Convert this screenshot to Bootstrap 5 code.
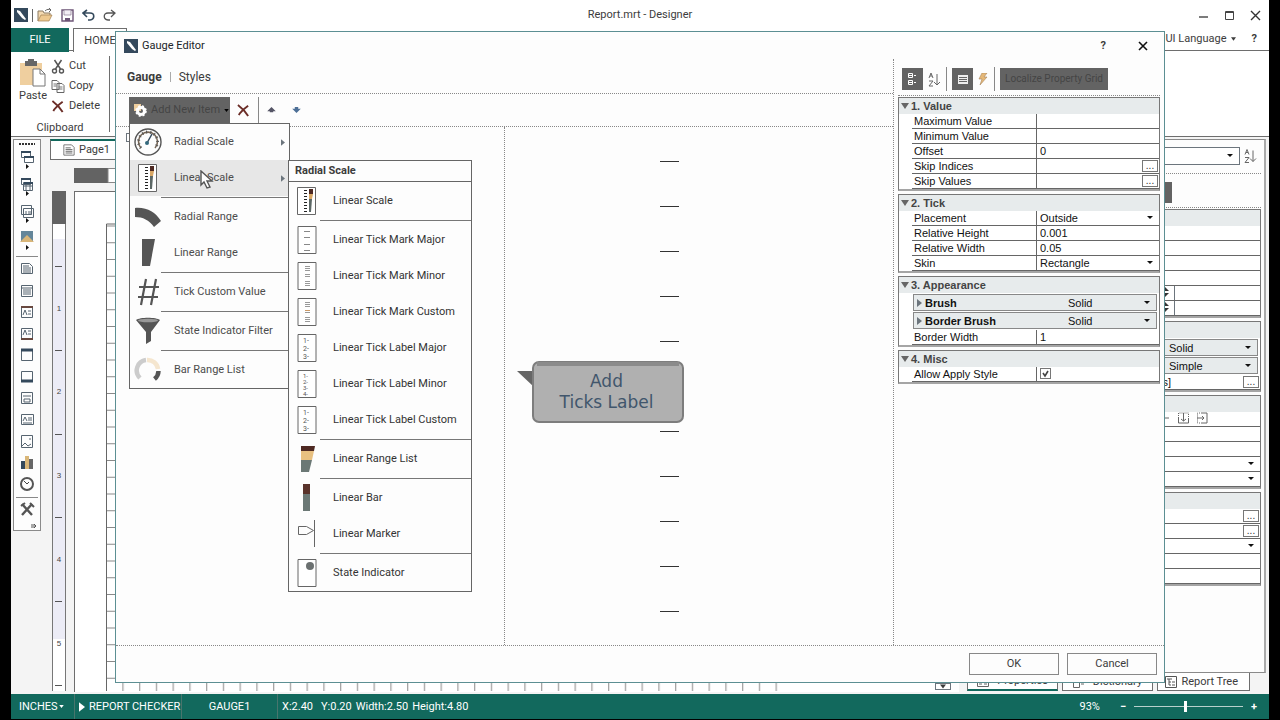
<!DOCTYPE html>
<html lang="en">
<head>
<meta charset="utf-8">
<meta name="viewport" content="width=device-width, initial-scale=1">
<title>Report.mrt - Designer</title>
<link href="https://cdn.jsdelivr.net/npm/bootstrap@5.3.0/dist/css/bootstrap.min.css" rel="stylesheet">
<style>
:root{--teal:#12695d;--line:#6e6e6e;--ink:#3c3c3c;--head:#e7ebec}
body{background:#000;font-family:Roboto,"Liberation Sans",sans-serif;font-size:11px;line-height:16px;color:var(--ink)}
button,input,select{font:inherit;color:inherit;border-radius:0}
svg{display:block;flex:none}
a{color:inherit;text-decoration:none}
.app{margin:0 11px;min-height:100vh;background:#fff;border-bottom:1px solid #000}
.plain{border:0;background:none;padding:0;display:flex;align-items:center}
.titlebar{height:28px;padding:2px 8px 0 3px}
.filetab{background:var(--teal);color:#fff;width:58px;height:24px}
.hometab{border:1px solid var(--line);border-bottom:0;width:54px;height:24px}
.tabfill{border-bottom:1px solid var(--line);height:23px}
.ribbon{height:85px;border-bottom:1px solid var(--line)}
.clip{width:99px;border-right:1px solid var(--line);margin:4px 0 0;height:76px}
.work{background:#f4f4f4;min-height:0}
.toolstrip{width:28px;border:1px solid #8a8a8a;background:#fdfdfd;margin:2px 0 0 2px;align-self:flex-start}
.pagetab{width:90px;height:21px;border:1px solid var(--line);border-top:2px solid var(--teal);background:#fff;padding-left:12px}
.sheet{background:#fff;border:1px solid var(--line);border-width:1px 0 0 1px}
.side{width:310px}
.sidebox{border:1px solid #8a8a8a;border-right:2px solid #aaa;background:#fdfdfd;margin-top:2px;padding:7px 3px 0 4px}
.btab{height:18px;width:91px;background:#fff;border:1px solid var(--line);border-top:0}
.btab.active{border-bottom:2px solid var(--teal)}
.status{background:var(--teal);color:#fff;height:25px;padding:0 8px}
.cell{border-right:1px solid #48756d;height:25px}
.zoomer{appearance:none;width:109px;height:14px;background:linear-gradient(#b9d0cc,#b9d0cc) center/100% 1px no-repeat}
.zoomer::-webkit-slider-thumb{appearance:none;width:3px;height:11px;background:#fff}
/* property grid shared by the side panel and the dialog */
.group{border:1px solid #777;border-bottom:2px solid #a5a5a5;background:#fff;margin-bottom:3px;font-family:"Liberation Sans",Arial,sans-serif;color:#111;line-height:14px}
.group h2{font-size:11px;font-weight:700;line-height:14px;height:16px;margin:0;background:var(--head);padding-left:2px;color:#444;gap:2px}
.first{margin-top:1px}
.prow{margin-left:13px;height:15px;border-bottom:1px solid #666;display:flex}
.prow label{width:125px;padding-left:2px;border-right:1px solid #666;flex:none}
.prow input:not([type=checkbox]),.prow select{border:0;outline:0;background:none;flex:1;min-width:0;padding:0 3px;height:14px;line-height:14px}
select{appearance:none;background:url("data:image/svg+xml,%3Csvg xmlns='http://www.w3.org/2000/svg' width='6' height='4'%3E%3Cpath d='M0 0h6L3 3z' fill='%23111'/%3E%3C/svg%3E") right 6px center no-repeat!important}
.prow input[type=checkbox]{appearance:none;width:11px;height:11px;border:1px solid #777;margin:1px 3px;background:url("data:image/svg+xml,%3Csvg xmlns='http://www.w3.org/2000/svg' width='9' height='9'%3E%3Cpath d='M2 4l2 3 3-5' fill='none' stroke='%23444' stroke-width='1.6'/%3E%3C/svg%3E")}
.more{width:16px;height:12px;border:1px solid #777;background:#fff;line-height:8px;padding:0;margin:1px 1px 0;font-size:10px;flex:none;color:#333}
.brush{height:17px;border:1px solid #888;background:var(--head);margin:1px 2px 1px 14px;padding-left:3px;gap:3px;font-weight:700}
.brush select{border:0;background:none;width:88px;height:15px;padding:0;font-weight:400}
/* dialog */
.editor{position:absolute;top:31px;left:115px;right:115px;bottom:37px;background:#fdfdfd;border:1px solid #5c8f93;z-index:5}
.dots-b{border-bottom:1px dotted #888}
.dots-r{border-right:1px dotted #888}
.dark{background:#636363;height:22px}
.faint{color:#454545}
.pop{position:absolute;background:#fdfdfd;border:1px solid #666;z-index:10}
.pop hr{margin:1px 0 1px 31px;border:0;border-top:1px solid #777;opacity:1}
.entry{height:36px;width:100%;border:0;background:none;display:flex;align-items:center;padding:0 4px;gap:12px;text-align:left;color:#4c4c4c}
.entry.on{background:#e7e7e7}
.entry .go{margin-left:auto}
.sub .entry{color:#333}
.sub h3{font-size:11px;font-weight:700;line-height:20px;margin:0 0 1px;padding-left:6px;border-bottom:1px solid #666}
.okbtn{width:90px;height:22px;border:1px solid #888;background:#fdfdfd}
.bubble{position:absolute;left:12px;top:232px;z-index:2}
.bubble div{position:absolute;left:14px;right:2px;top:0;bottom:0;font-family:"DejaVu Sans",sans-serif;font-size:17px;line-height:21px;color:#41566c}
</style>
</head>
<body>
<svg width="0" height="0" class="position-absolute" aria-hidden="true">
<defs>
<symbol id="logo" viewBox="0 0 14 14"><path d="M0 0h14v14H0z" fill="#34495c"/><path d="M3 2l3 1 6 8-1 1-3-2-5-6z" fill="#fff"/></symbol>
<symbol id="del" viewBox="0 0 14 14"><path d="M1 1c4 3 8 7 11 12M12 2C8 5 4 8 2 12" stroke="#6b2d27" stroke-width="2" fill="none"/></symbol>
<symbol id="az" viewBox="0 0 13 15"><path d="M1 6l2-5 2 5M2 4h2M1 9h4l-4 5h4M9 2v11M6 10l3 3 3-3" fill="none" stroke="#666"/></symbol>
<symbol id="dn" viewBox="0 0 6 4"><path d="M0 0h6L3 4z" fill="currentColor"/></symbol>
<symbol id="rt" viewBox="0 0 5 8"><path d="M0 0v8l5-4z" fill="currentColor"/></symbol>
<symbol id="tri" viewBox="0 0 8 6"><path d="M0 0h8L4 6z" fill="#666"/></symbol>
<symbol id="box" viewBox="0 0 20 28"><path d="M1 .5h18v27H1z" fill="#fff" stroke="#666"/></symbol>
<symbol id="lscale" viewBox="0 0 20 28"><path d="M.5.5h18v27H.5z" fill="#fff" stroke="#666"/><path d="M8.500 3v22" stroke="#222" stroke-width="3" stroke-dasharray="1 2"/><path d="M12 2h4v5h-4z" fill="#4e2922"/><path d="M12 7h4l-1 5h-3z" fill="#d9a765"/><path d="M12 12h3l-1 13h-2z" fill="#5c6765"/></symbol>
<symbol id="sheetico" viewBox="0 0 14 14"><path d="M1 1h9l3 3v9H1z" fill="#fff" stroke="#666"/><path d="M3 4.500h6M3 6.500h8M3 8.500h8M3 10.500h8" stroke="#555"/></symbol>
</defs></svg>

<div class="app d-flex flex-column position-relative">
  <header class="titlebar d-flex align-items-center position-relative">
    <svg width="14" height="14"><use href="#logo"/></svg>
    <span style="border-left:1px solid #666;height:13px" class="ms-1 me-1"></span>
    <button class="plain me-2" aria-label="Open"><svg width="16" height="14" viewBox="0 0 16 14"><path d="M1 13V3h5l1 2h6v2" fill="#f3d9b0" stroke="#8b7a62"/><path d="M1 13l3-6h11l-3 6z" fill="#edc88f" stroke="#a08050" stroke-width=".7"/><path d="M8 3c2-2 4-2 6-1M12 0l2 2-2 2" fill="none" stroke="#666"/></svg></button>
    <button class="plain me-2" aria-label="Save"><svg width="13" height="13" viewBox="0 0 13 13"><path d="M1 1h11v11H1z" fill="#fff" stroke="#6d5577" stroke-width="1.400"/><path d="M3 1h7v5H3z" fill="#f3eef5" stroke="#8b7893" stroke-width=".7"/><path d="M4 9h5v3H4z" fill="#6d5577"/></svg></button>
    <button class="plain me-2" aria-label="Undo"><svg width="13" height="12" viewBox="0 0 13 12"><path d="M5 1L1 4l4 4M1 4h7c5 0 5 6 0 7H6" fill="none" stroke="#34495c" stroke-width="1.600"/></svg></button>
    <button class="plain" aria-label="Redo"><svg width="13" height="12" viewBox="0 0 13 12"><path d="M8 1l4 3-4 4M12 4H5c-5 0-5 6 0 7h2" fill="none" stroke="#555" stroke-width="1.300"/></svg></button>
    <div class="flex-fill text-center" style="padding-right:34px">Report.mrt - Designer</div>
    <div class="d-flex align-items-center" style="gap:15px">
      <button class="plain" aria-label="Minimize"><svg width="11" height="11" viewBox="0 0 11 11"><path d="M1 7h9" stroke="#444" stroke-width="1.400"/></svg></button>
      <button class="plain" aria-label="Maximize"><svg width="11" height="11" viewBox="0 0 11 11"><path d="M1.500 1.500h8v8h-8zM1 2.500h9" fill="none" stroke="#444"/></svg></button>
      <button class="plain" aria-label="Close"><svg width="11" height="11" viewBox="0 0 11 11"><path d="M1 1l9 9M10 1l-9 9" stroke="#333" stroke-width="1.400"/></svg></button>
    </div>
  </header>
  <nav class="d-flex">
    <a href="#" class="filetab d-flex align-items-center justify-content-center">FILE</a>
    <div class="tabfill ps-1"></div>
    <a href="#" class="hometab d-flex align-items-center justify-content-center">HOME</a>
    <div class="tabfill flex-fill d-flex align-items-center justify-content-end pe-2 gap-3">
      <a href="#" class="d-flex align-items-center gap-1">Select UI Language <svg width="5" height="4"><use href="#dn"/></svg></a><a href="#" class="fw-bold me-1">?</a>
    </div>
  </nav>
  <section class="ribbon">
    <div class="clip d-flex flex-column justify-content-between position-relative">
      <div class="d-flex ps-2 gap-1">
        <button class="plain flex-column"><svg width="27" height="32" viewBox="0 -2 27 32"><path d="M1 5h22v22H1z" fill="#efcf9f"/><path d="M6 3h3V1h6v2h3v5H6z" fill="#666"/><path d="M14 11h7l5 5v12H14z" fill="#fff" stroke="#777"/><path d="M21 11v5h5" fill="none" stroke="#777"/></svg><span>Paste</span></button>
        <div>
          <button class="plain gap-1" style="height:20px"><svg width="14" height="15" viewBox="0 0 13 15"><path d="M3 1l6 9M10 1L4 10" stroke="#555" stroke-width="1.500"/><circle cx="3" cy="12" r="2" fill="none" stroke="#555" stroke-width="1.400"/><circle cx="10" cy="12" r="2" fill="none" stroke="#555" stroke-width="1.400"/></svg>Cut</button>
          <button class="plain gap-1" style="height:20px"><svg width="14" height="13" viewBox="0 0 13 13"><path d="M.5.5h5l2 2v7h-7zM5.500 3.500h5l2 2v7h-7z" fill="#fff" stroke="#666"/><path d="M2 4h3M2 6h3M7 7h4M7 9h4" stroke="#777"/></svg>Copy</button>
          <button class="plain gap-1" style="height:20px"><svg width="14" height="13"><use href="#del"/></svg>Delete</button>
        </div>
      </div>
      <div class="text-center" style="line-height:8px">Clipboard</div>
    </div>
  </section>

  <main class="work flex-fill d-flex">
    <div class="toolstrip">
      <svg width="26" height="390" viewBox="0 0 26 390" fill="none" stroke="#566470">
        <path d="M5 4h16" stroke="#333" stroke-width="2" stroke-dasharray="2 1"/>
        <path d="M7.500 11.500h9v6h-9zM10.500 16.500h9v6h-9z" fill="#fff"/><path d="M7 12h10M10 17h10" stroke="#34495c" stroke-width="2"/>
        <path d="M7.500 38.500h9v6h-9zM9.500 42.500h9v8h-9zM9 46h10M12 42v9M16 42v9" /><path d="M7 39h10M10 43h9" stroke="#34495c" stroke-width="2"/>
        <path d="M7.500 65.500h10v9h-10zM9.500 68.500h10v9h-10zM12 71v4M15 71v4M17 71v4"/>
        <path d="M7 91h12v11H7z" fill="#64869a" stroke="none"/><path d="M6 102l7-7 4 4 3 3z" fill="#d9b678" stroke="none"/>
        <path d="M12 24v5l3-2.500zM12 51v5l3-2.500zM12 78v5l3-2.500zM12 105v5l3-2.500z" fill="#111" stroke="none"/>
        <path d="M2 116.500h22" stroke="#888"/>
        <path d="M7.500 123.500h8l3 3v7h-11zM9 126h6M9 128h8M9 130h8M9 132h8"/><path d="M7.500 145.500h11v11h-11zM7 148h12M9 150h8M9 152h8M9 154h8"/>
        <path d="M7.500 167.500h11v10h-11zM14 171h3M14 174h3M9 175l2-5 2 5M7.500 188.500h11v10h-11zM14 191h3M14 194h3M9 195l2-5 2 5"/><path d="M7 167h12M7 199h12" stroke="#68483f" stroke-width="2"/>
        <path d="M7.500 209.500h11v11h-11zM7.500 231.500h11v10h-11z"/><path d="M7 210h12M7 241h12" stroke="#34495c" stroke-width="3"/>
        <path d="M7.500 252.500h11v11h-11zM9 256h8M10 259h6v3h-6zM7.500 274.500h12v10h-12zM14 278h4M14 280h4M9 283h9M9 281l2-4 2 4M7.500 295.500h11v12h-11zM8 306l3-3 3 3 3-2M15 299h2"/>
        <path d="M7 321h4v8H7z" fill="#34495c" stroke="none"/><path d="M11 316h4v13h-4z" fill="#d9b678" stroke="none"/><path d="M15 319h4v10h-4z" fill="#666" stroke="none"/>
        <circle cx="13" cy="344" r="6" stroke="#555" stroke-width="2"/><path d="M10 341l3 3 2-2" stroke="#444"/>
        <path d="M2 357.500h22" stroke="#888"/><path d="M8 364l10 11M18 364L8 375" stroke="#555" stroke-width="2.400"/><path d="M7 366l4-3M16 363l4 4" stroke="#555" stroke-width="2"/>
        <path d="M18 384v4M20 384v4l2-2z" stroke="#555"/>
      </svg>
    </div>
    <div class="flex-fill d-flex flex-column position-relative" style="padding:2px 0 2px 9px">
      <a href="#" class="pagetab d-flex align-items-center gap-1"><svg width="12" height="14"><use href="#sheetico"/></svg>Page1</a>
      <svg class="ms-4 mt-2" width="100%" height="15"><path d="M0 0h34v15H0z" fill="#636363"/><path d="M34 .5h900v14H34z" fill="#fff" stroke="#888"/></svg>
      <div class="d-flex flex-fill mt-2 gap-2">
        <svg width="14" height="500" viewBox="0 0 14 500" style="margin-left:2px" font-size="8" font-family="Liberation Sans, sans-serif" text-anchor="middle">
          <path d="M0 0h14v500H0z" fill="#fff"/><path d="M0 48h14v400H0z" fill="#ececf6"/><path d="M.5 0v500M13.500 0v500" stroke="#777"/><path d="M0 0h14v33H0z" fill="#636363"/>
          <path d="M3 75.500h7M3 159.500h7M3 243.500h7M3 326.500h7M3 410.500h7M3 494.500h7" stroke="#555"/>
          <g fill="#444"><text x="7" y="120">1</text><text x="7" y="203">2</text><text x="7" y="287">3</text><text x="7" y="371">4</text><text x="7" y="455">5</text></g>
        </svg>
        <div class="sheet flex-fill overflow-hidden">
          <svg width="100%" height="499">
            <defs><pattern id="pv" width="10" height="16.750" patternUnits="userSpaceOnUse"><path d="M0 0h10v1H0z" fill="#888"/></pattern><pattern id="ph" width="16.750" height="10" patternUnits="userSpaceOnUse"><path d="M14 0h1v10h-1z" fill="#888"/></pattern></defs>
            <path d="M31.500 499V32h80" stroke="#666" fill="none"/><rect x="32" y="32" width="10" height="467" fill="url(#pv)"/><rect x="42" y="485" width="670" height="14" fill="url(#ph)"/>
          </svg>
        </div>
      </div>
      <span class="position-absolute bottom-0 end-0 bg-white border border-secondary px-1 me-2 mb-1"><svg width="6" height="5"><use href="#dn"/></svg></span>
    </div>
    <aside class="side d-flex flex-column" style="padding:0 3px 3px 0">
      <div class="sidebox flex-fill">
        <div class="d-flex align-items-center justify-content-between pe-1 pb-2 dots-b"><select class="border border-secondary bg-white" style="width:276px;height:18px" aria-label="Component"><option></option></select><svg width="13" height="16"><use href="#az"/></svg></div>
        <div class="d-flex dots-b pt-2 pb-1"><span class="dark" style="width:208px;height:21px"></span></div>
        <div class="group first">
          <h2></h2>
          <div class="prow"></div><div class="prow"></div><div class="prow"></div><div class="prow"></div>
          <div class="prow"><span style="width:197px" class="border-end border-secondary pe-1"><svg class="ms-auto" width="8" height="13" viewBox="0 0 8 13"><path d="M0 5l3-4 4 4zM0 7l3 4 4-4z" fill="#333"/></svg></span></div><div class="prow"><span style="width:197px" class="border-end border-secondary pe-1"><svg class="ms-auto" width="8" height="13" viewBox="0 0 8 13"><path d="M0 5l3-4 4 4zM0 7l3 4 4-4z" fill="#333"/></svg></span></div>
        </div>
        <div class="group">
          <h2></h2>
          <div class="brush d-flex justify-content-end"><select aria-label="Brush"><option>Solid</option></select></div>
          <div class="brush d-flex justify-content-end"><select aria-label="Border"><option>Simple</option></select></div>
          <div class="prow"><input aria-label="Conditions" value="[No Conditions]" class="text-end" style="padding-right:71px"><button class="more">...</button></div>
        </div>
        <div class="group">
          <h2></h2>
          <div class="prow justify-content-end pe-5 gap-2"><svg width="11" height="12" viewBox="0 0 11 12" fill="none" stroke="#666"><path d="M.5 1h5v10h-5zM10 6H4M6 4L4 6l2 2"/></svg><svg width="11" height="12" viewBox="0 0 11 12" fill="none" stroke="#666"><path d="M.5 6v5h10V6M5.500 1v8M3 7l2.500 2L8 7"/><path d="M.5 6V1h10v5" stroke-dasharray="1 1"/></svg><svg class="me-1" width="11" height="12" viewBox="0 0 11 12" fill="none" stroke="#666"><path d="M5 1h5v10H5M0 6h7M5 4l2 2-2 2"/><path d="M5 1H.5v10H5" stroke-dasharray="1 1"/></svg></div>
          <div class="prow"></div><div class="prow"></div>
          <div class="prow"><select aria-label="Anchor"><option></option></select></div><div class="prow"><select aria-label="Dock"><option></option></select></div>
        </div>
        <div class="group">
          <h2></h2>
          <div class="prow justify-content-end"><button class="more">...</button></div><div class="prow justify-content-end"><button class="more">...</button></div>
          <div class="prow"><select aria-label="Restrictions"><option></option></select></div><div class="prow"></div><div class="prow"></div>
        </div>
      </div>
      <div class="d-flex gap-1 ps-2 pe-3">
        <a href="#" class="btab active d-flex align-items-center justify-content-center gap-2"><svg width="12" height="12" viewBox="0 0 12 12"><path d="M.5.5h11v11H.5zM2 4h3M7 4h3M2 7h3M7 7h3M2 9h3M7 9h3" fill="none" stroke="#666"/></svg>Properties</a>
        <a href="#" class="btab d-flex align-items-center justify-content-center gap-2"><svg width="12" height="12" viewBox="0 0 12 12"><path d="M.5 3.500h6v8h-6zM8 8h3" fill="none" stroke="#666"/></svg>Dictionary</a>
        <a href="#" class="btab d-flex align-items-center justify-content-end gap-1 flex-fill" style="padding-right:11px"><svg width="12" height="12" viewBox="0 0 12 12"><path d="M.5.500h11v11H.5zM2 3h5M4 3v6h2M4 6h2M7 6h3M7 9h3" fill="none" stroke="#555"/></svg>Report Tree</a>
      </div>
    </aside>
  </main>

  <footer class="status d-flex align-items-center">
    <div class="cell d-flex align-items-center justify-content-between" style="width:56px;padding-right:10px">INCHES <svg width="5" height="3"><use href="#dn"/></svg></div>
    <div class="cell d-flex align-items-center gap-1 ps-1" style="width:107px"><svg width="6" height="10"><use href="#rt"/></svg>REPORT CHECKER</div>
    <div class="cell d-flex align-items-center justify-content-center" style="width:96px">GAUGE1</div>
    <div class="d-flex gap-1 ps-1"><span>X:2.40</span><span class="ms-1">Y:0.20</span><span>Width:2.50</span><span>Height:4.80</span></div>
    <div class="ms-auto d-flex align-items-center gap-2 pe-1"><span class="me-2 pe-1">93%</span><span class="fw-bold">−</span><input class="zoomer" type="range" min="0" max="100" value="47" aria-label="Zoom"><span class="fw-bold">+</span></div>
  </footer>
</div>

<div class="editor d-flex flex-column" role="dialog" aria-label="Gauge Editor">
  <div class="d-flex align-items-center ps-2 pe-3" style="height:27px;gap:4px">
    <svg width="14" height="14"><use href="#logo"/></svg><span class="text-dark">Gauge Editor</span>
    <button class="plain fw-bold ms-auto">?</button>
    <button class="plain" aria-label="Close editor" style="margin-left:28px"><svg width="10" height="10" viewBox="0 0 10 10"><path d="M1 1l8 8M9 1L1 9" stroke="#111" stroke-width="1.600"/></svg></button>
  </div>
  <div class="flex-fill d-flex dots-b">
    <div class="flex-fill d-flex flex-column dots-r">
      <div class="dots-b d-flex align-items-center gap-2" style="height:35px;padding:2px 0 0 11px;font-size:12px"><a href="#" class="fw-bold">Gauge</a><span style="border-left:1px solid #aaa;height:10px"></span><a href="#">Styles</a></div>
      <div class="dots-b d-flex align-items-center" style="height:33px;padding-left:13px">
        <div class="position-relative">
          <button class="plain dark gap-1 px-1" style="width:101px;height:26px"><svg width="14" height="14" viewBox="0 0 14 14"><path d="M1 1h7v7H1z" fill="#efcf9f"/><circle cx="8" cy="8" r="3.500" fill="none" stroke="#fff" stroke-width="3"/><circle cx="8" cy="8" r="5" fill="none" stroke="#fff" stroke-width="1.500" stroke-dasharray="2 2"/></svg><span class="faint text-nowrap">Add New Item</span><svg class="ms-auto text-black" width="5" height="3"><use href="#dn"/></svg></button>
          <div class="pop" style="left:0;top:26px;width:161px">
            <button class="entry"><svg width="28" height="28" viewBox="0 0 28 28" fill="none" stroke="#555"><circle cx="14" cy="14" r="13" stroke-width="1.400"/><path d="M7 20a9.500 9.500 0 1 1 14 0" stroke-width="1.600" stroke="#765"/><path d="M7 20a9.500 9.500 0 1 1 14 0" stroke-width="3" stroke-dasharray="1 3"/><path d="M13 15l5-9" stroke="#34495c" stroke-width="1.500"/><circle cx="13" cy="15" r="2" fill="#34697c" stroke="none"/></svg>Radial Scale<svg class="go text-secondary" width="4" height="7"><use href="#rt"/></svg></button>
            <button class="entry on"><svg width="28" height="28"><use href="#lscale" x="4" width="20" height="28"/></svg>Linear Scale<svg class="go text-secondary" width="4" height="7"><use href="#rt"/></svg></button>
            <hr>
            <button class="entry"><svg width="28" height="28" viewBox="0 0 28 28"><path d="M1 5c12-1 20 4 26 13l-7 6C15 17 9 14 1 14z" fill="#555"/></svg>Radial Range</button>
            <button class="entry"><svg width="28" height="28" viewBox="0 0 28 28"><path d="M8 0h13l-5 27H8z" fill="#555"/></svg>Linear Range</button>
            <hr>
            <button class="entry"><svg width="28" height="28" viewBox="0 0 28 28"><path d="M12 1L7 27M22 1l-5 26M5 9h20M4 19h20" stroke="#555" stroke-width="2.200"/></svg>Tick Custom Value</button>
            <hr>
            <button class="entry"><svg width="28" height="28" viewBox="0 0 28 28"><path d="M2 3c4-3 20-3 24 0l-9 12v9l-5 3V15z" fill="#555"/><ellipse cx="14" cy="3.500" rx="10" ry="1.700" fill="#999"/></svg>State Indicator Filter</button>
            <hr>
            <button class="entry"><svg width="28" height="28" viewBox="0 0 28 28" fill="none" stroke-width="4.500"><path d="M6 22A10.500 10.500 0 0 1 12 4" stroke="#ccc"/><path d="M13 4a10.500 10.500 0 0 1 11 9" stroke="#f5e6cf"/><path d="M24.500 15a10.500 10.500 0 0 1-4 8" stroke="#555"/></svg>Bar Range List</button>
          </div>
          <div class="pop sub" style="left:159px;top:63px;width:184px">
            <h3>Radial Scale</h3>
            <button class="entry"><svg width="28" height="28"><use href="#lscale" x="4" width="20" height="28"/></svg>Linear Scale</button>
            <hr>
            <button class="entry"><svg width="28" height="28"><use href="#box" x="4" width="20" height="28"/><path d="M11 5.500h6M11 11.500h6M11 18.500h6M11 24.500h6" stroke="#888"/></svg>Linear Tick Mark Major</button>
            <button class="entry"><svg width="28" height="28"><use href="#box" x="4" width="20" height="28"/><path d="M12 4.500h5M12 6.500h5M12 8.500h5M12 12.500h5M12 14.500h5M12 19.500h5M12 21.500h5M12 23.500h5" stroke="#999"/></svg>Linear Tick Mark Minor</button>
            <button class="entry"><svg width="28" height="28"><use href="#box" x="4" width="20" height="28"/><path d="M12 4.500h5M12 6.500h5M12 8.500h5M12 14.500h5M12 19.500h5M12 21.500h5M12 23.500h5" stroke="#999"/><path d="M12 12.500h5" stroke="#c96"/></svg>Linear Tick Mark Custom</button>
            <button class="entry"><svg width="28" height="28" font-size="7" fill="#555"><use href="#box" x="4" width="20" height="28"/><text x="10" y="9">1-</text><text x="10" y="17">2-</text><text x="10" y="25">3-</text></svg>Linear Tick Label Major</button>
            <button class="entry"><svg width="28" height="28" font-size="6" fill="#555"><use href="#box" x="4" width="20" height="28"/><text x="10" y="8">1-</text><text x="10" y="14">2-</text><text x="10" y="20">3-</text><text x="10" y="26">4-</text></svg>Linear Tick Label Minor</button>
            <button class="entry"><svg width="28" height="28" font-size="7" fill="#555"><use href="#box" x="4" width="20" height="28"/><text x="10" y="9">1-</text><text x="10" y="17">2-</text><text x="10" y="25">3-</text></svg>Linear Tick Label Custom</button>
            <hr>
            <button class="entry"><svg width="28" height="28"><path d="M8 1h14l-1 5H8z" fill="#4e2922"/><path d="M8 6h13l-2 9H8z" fill="#e8c080"/><path d="M8 15h11l-3 12H8z" fill="#6b7875"/></svg>Linear Range List</button>
            <hr>
            <button class="entry"><svg width="28" height="28"><path d="M10 0h7v10h-7z" fill="#5a332b"/><path d="M10 10h7v17h-7z" fill="#6b7875"/></svg>Linear Bar</button>
            <button class="entry"><svg width="28" height="28" fill="none" stroke="#666"><path d="M5.500 6.500h8l7 4-7 4h-8zM21.500 0v27"/></svg>Linear Marker</button>
            <hr>
            <button class="entry"><svg width="28" height="28"><use href="#box" x="4" width="20" height="28"/><circle cx="17" cy="7" r="4" fill="#6b7070"/></svg>State Indicator</button>
          </div>
          <svg class="position-absolute" style="left:71px;top:73px;z-index:12" width="14" height="20" viewBox="0 0 14 20"><path d="M1 1v14l3-3 3 6 3-1-3-6h5z" fill="#fff" stroke="#555" stroke-width="1.400"/></svg>
        </div>
        <button class="plain" aria-label="Delete item" style="margin-left:7px"><svg width="13" height="13"><use href="#del"/></svg></button>
        <span style="border-left:1px solid #888;height:26px;margin-left:8px"></span>
        <button class="plain ms-2" aria-label="Move up"><svg width="9" height="6" viewBox="0 0 10 7"><path d="M0 5l5-5 5 5-3 0v1H3V5z" fill="#556"/></svg></button>
        <button class="plain ms-3" aria-label="Move down"><svg width="9" height="6" viewBox="0 0 10 7"><path d="M0 2l5 5 5-5H7V0H3v2z" fill="#4d6f96"/></svg></button>
      </div>
      <div class="flex-fill d-flex">
        <div class="dots-r position-relative" style="width:50%"><span class="position-absolute bg-white border border-secondary" style="left:10px;top:6px;width:9px;height:9px"></span></div>
        <div class="flex-fill position-relative">
          <svg width="200" height="500"><path d="M155 34.500h19M155 79.500h19M155 124.500h19M155 169.500h19M155 214.500h19M155 304.500h19M155 349.500h19M155 394.500h19M155 439.500h19M155 484.500h19" stroke="#333"/></svg>
          <div class="bubble"><svg width="168" height="64" viewBox="0 0 168 64"><path d="M0 12h17v16z" fill="#666"/><rect x="16" y="3" width="150" height="60" rx="6" fill="#b0b0b0" stroke="#7d7d7d" stroke-width="2"/><path d="M20 5h142" stroke="#8b8b8b" stroke-width="4"/></svg><div class="text-center" style="padding-top:12px">Add<br>Ticks Label</div></div>
        </div>
      </div>
    </div>
    <div class="px-1" style="width:270px">
      <div class="d-flex align-items-center dots-b" style="height:37px;padding:4px 0 0 4px;gap:5px">
        <button class="plain dark justify-content-center" style="width:21px" aria-label="Categorized"><svg width="10" height="14" viewBox="0 0 10 14" fill="none" stroke="#fff"><path d="M.5 1.500h4v4h-4zM.5 8.500h4v4h-4zM1 3.500h3M1 10.500h3M6 3.500h2M6 10.500h2"/></svg></button>
        <button class="plain" aria-label="Sort"><svg width="13" height="15"><use href="#az"/></svg></button>
        <span style="border-left:1px solid #888;height:24px"></span>
        <button class="plain dark justify-content-center" style="width:21px" aria-label="Properties view"><svg width="10" height="9" viewBox="0 0 10 9"><path d="M0 0h10v9H0z" fill="#eee"/><path d="M1 2.500h8M1 4.500h8M1 6.500h8" stroke="#666"/></svg></button>
        <button class="plain" aria-label="Events"><svg width="11" height="13" viewBox="0 0 11 13"><path d="M4 0h5L6 4h3L2 12l2-6H1z" fill="#e5b878" stroke="#a8855a" stroke-width=".6"/></svg></button>
        <span style="border-left:1px solid #888;height:24px"></span>
        <button class="plain dark faint justify-content-center text-nowrap" style="width:108px;font-size:10px">Localize Property Grid</button>
      </div>
      <div class="group first">
        <h2 class="d-flex align-items-center"><svg width="8" height="6"><use href="#tri"/></svg>1. Value</h2>
        <div class="prow"><label for="mx">Maximum Value</label><input id="mx"></div>
        <div class="prow"><label for="mn">Minimum Value</label><input id="mn"></div>
        <div class="prow"><label for="of">Offset</label><input id="of" value="0"></div>
        <div class="prow"><label for="si">Skip Indices</label><input id="si"><button class="more">...</button></div>
        <div class="prow"><label for="sv">Skip Values</label><input id="sv"><button class="more">...</button></div>
      </div>
      <div class="group">
        <h2 class="d-flex align-items-center"><svg width="8" height="6"><use href="#tri"/></svg>2. Tick</h2>
        <div class="prow"><label for="pl">Placement</label><select id="pl"><option>Outside</option></select></div>
        <div class="prow"><label for="rh">Relative Height</label><input id="rh" value="0.001" autofocus></div>
        <div class="prow"><label for="rw">Relative Width</label><input id="rw" value="0.05"></div>
        <div class="prow"><label for="sk">Skin</label><select id="sk"><option>Rectangle</option></select></div>
      </div>
      <div class="group">
        <h2 class="d-flex align-items-center"><svg width="8" height="6"><use href="#tri"/></svg>3. Appearance</h2>
        <div class="brush d-flex align-items-center"><svg class="text-secondary" width="5" height="8"><use href="#rt"/></svg><label class="me-auto" for="br">Brush</label><select id="br"><option>Solid</option></select></div>
        <div class="brush d-flex align-items-center"><svg class="text-secondary" width="5" height="8"><use href="#rt"/></svg><label class="me-auto" for="bb">Border Brush</label><select id="bb"><option>Solid</option></select></div>
        <div class="prow"><label for="bw">Border Width</label><input id="bw" value="1"></div>
      </div>
      <div class="group">
        <h2 class="d-flex align-items-center"><svg width="8" height="6"><use href="#tri"/></svg>4. Misc</h2>
        <div class="prow"><label for="aa">Allow Apply Style</label><input id="aa" type="checkbox" checked></div>
      </div>
    </div>
  </div>
  <div class="d-flex justify-content-end align-items-center gap-2" style="height:36px;padding-right:7px"><button class="okbtn">OK</button><button class="okbtn">Cancel</button></div>
</div>
<script src="https://cdn.jsdelivr.net/npm/bootstrap@5.3.0/dist/js/bootstrap.bundle.min.js"></script>
</body>
</html>
